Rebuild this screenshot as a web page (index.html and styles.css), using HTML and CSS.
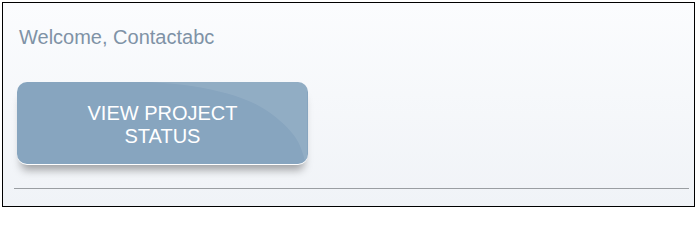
FILE: index.html
```html
<!DOCTYPE html>
<html>
<head>
<meta charset="utf-8">
<link rel="stylesheet" href="styles.css">
</head>
<body>
<div class="frame">
  <div class="welcome">Welcome, Contactabc</div>
  <a class="status-btn" href="#">
    <svg class="gloss" width="290" height="82" viewBox="0 0 290 82" aria-hidden="true">
      <path d="M130,0 C180,2 230,12 256,33 C282,54 283,62 289,82 L290,82 L290,0 Z" fill="rgba(255,255,255,0.09)"/>
    </svg>
    <span class="label">VIEW PROJECT<br>STATUS</span>
  </a>
  <div class="rule"></div>
</div>
</body>
</html>
```
FILE: styles.css
```css
html, body {
  margin: 0;
  padding: 0;
  background: #ffffff;
}
.frame {
  margin: 2px;
  width: 693px;
  height: 205px;
  box-sizing: border-box;
  border: 1px solid #000;
  background: linear-gradient(to bottom, #fbfcfe 0%, #f0f3f7 100%);
  display: flex;
  flex-direction: column;
  align-items: flex-start;
  font-family: "Liberation Sans", Arial, sans-serif;
}
.welcome {
  margin: 23px 0 0 16px;
  font-size: 20px;
  line-height: 23px;
  color: #7f92a6;
}
.status-btn {
  position: relative;
  overflow: hidden;
  margin: 33px 0 0 14px;
  width: 291px;
  height: 82px;
  border-radius: 10px;
  background: #87a5bf;
  color: #fff;
  text-decoration: none;
  display: flex;
  align-items: center;
  justify-content: center;
  padding-top: 3px;
  box-sizing: border-box;
  box-shadow: 0 1px 0 #ffffff, 0 10px 9px -4px rgba(0, 0, 0, 0.34);
}
.gloss {
  position: absolute;
  left: 0;
  top: 0;
}
.label {
  position: relative;
  font-size: 20px;
  line-height: 23px;
  text-align: center;
  color: #ffffff;
}
.rule {
  margin: 24px 0 0 11px;
  width: 675px;
  height: 1px;
  background: #9a9ea2;
}
```
